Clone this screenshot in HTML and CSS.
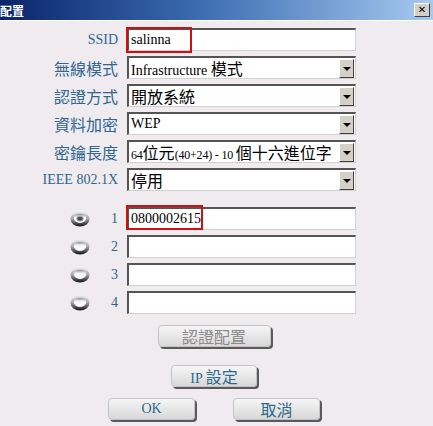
FILE: index.html
```html
<!DOCTYPE html>
<html lang="zh-Hant">
<head>
    <meta charset="UTF-8">
    <title>配置</title>
    <link rel="stylesheet" href="styles.css">
</head>
<body>
    <div class="titlebar">
        <span class="title">配置</span>
        <span class="close">✕</span>
    </div>

    <div class="form">
        <div class="row">
            <span class="label">SSID</span>
            <div class="field">
                <span class="value">salinna</span>
                <span class="mark mark-ssid"></span>
            </div>
        </div>
        <div class="row">
            <span class="label zh">無線模式</span>
            <div class="field select">
                <span class="value">Infrastructure <span class="zh">模式</span></span>
                <span class="arrow"></span>
            </div>
        </div>
        <div class="row">
            <span class="label zh">認證方式</span>
            <div class="field select">
                <span class="value zh">開放系統</span>
                <span class="arrow"></span>
            </div>
        </div>
        <div class="row">
            <span class="label zh">資料加密</span>
            <div class="field select">
                <span class="value">WEP</span>
                <span class="arrow"></span>
            </div>
        </div>
        <div class="row">
            <span class="label zh">密鑰長度</span>
            <div class="field select">
                <span class="value narrow">64<span class="zh">位元</span>(40+24) - 10 <span class="zh">個十六進位字</span></span>
                <span class="arrow"></span>
            </div>
        </div>
        <div class="row">
            <span class="label">IEEE 802.1X</span>
            <div class="field select">
                <span class="value zh">停用</span>
                <span class="arrow"></span>
            </div>
        </div>
    </div>

    <div class="form keys">
        <div class="row">
            <span class="label">
                <svg class="radio" width="20" height="16" viewBox="0 0 20 16">
                    <defs>
                        <linearGradient id="ring" x1="0" y1="0" x2="0" y2="1">
                            <stop offset="0" stop-color="#ececec"/>
                            <stop offset="0.5" stop-color="#a0a0a0"/>
                            <stop offset="1" stop-color="#101010"/>
                        </linearGradient>
                        <linearGradient id="hole" x1="0" y1="0" x2="0" y2="1">
                            <stop offset="0" stop-color="#8c8c8c"/>
                            <stop offset="0.4" stop-color="#f4f4f4"/>
                            <stop offset="1" stop-color="#ffffff"/>
                        </linearGradient>
                    </defs>
                    <ellipse cx="10" cy="8" rx="9.5" ry="7.5" fill="url(#ring)"/>
                    <ellipse cx="10" cy="7.3" rx="6.2" ry="4.6" fill="url(#hole)"/>
                    <ellipse cx="10" cy="7.7" rx="3.2" ry="2.4" fill="#4a4a4a" stroke="#a8a8a8" stroke-width="1"/>
                </svg>
                <span class="num">1</span>
            </span>
            <div class="field">
                <span class="value">0800002615<span class="caret"></span></span>
                <span class="mark mark-key"></span>
            </div>
        </div>
        <div class="row">
            <span class="label">
                <svg class="radio" width="20" height="16" viewBox="0 0 20 16">
                    <ellipse cx="10" cy="8" rx="9.5" ry="7.5" fill="url(#ring)"/>
                    <ellipse cx="10" cy="7.3" rx="6.2" ry="4.6" fill="url(#hole)"/>
                </svg>
                <span class="num">2</span>
            </span>
            <div class="field"></div>
        </div>
        <div class="row">
            <span class="label">
                <svg class="radio" width="20" height="16" viewBox="0 0 20 16">
                    <ellipse cx="10" cy="8" rx="9.5" ry="7.5" fill="url(#ring)"/>
                    <ellipse cx="10" cy="7.3" rx="6.2" ry="4.6" fill="url(#hole)"/>
                </svg>
                <span class="num">3</span>
            </span>
            <div class="field"></div>
        </div>
        <div class="row">
            <span class="label">
                <svg class="radio" width="20" height="16" viewBox="0 0 20 16">
                    <ellipse cx="10" cy="8" rx="9.5" ry="7.5" fill="url(#ring)"/>
                    <ellipse cx="10" cy="7.3" rx="6.2" ry="4.6" fill="url(#hole)"/>
                </svg>
                <span class="num">4</span>
            </span>
            <div class="field"></div>
        </div>
    </div>

    <div class="actions">
        <button class="btn btn-auth zh" disabled>認證配置</button>
        <button class="btn btn-ip">IP <span class="zh">設定</span></button>
        <div class="pair">
            <button class="btn btn-ok">OK</button>
            <button class="btn btn-cancel zh">取消</button>
        </div>
    </div>
</body>
</html>
```

FILE: styles.css
```css
body {
    margin: 0;
    width: 433px;
    height: 426px;
    overflow: hidden;
    background-color: #efebef;
    font-family: "Liberation Serif", "Noto Sans CJK TC", serif;
    font-size: 14px;
    color: #000;
}
.zh {
    font-family: "Noto Sans CJK TC", sans-serif;
    font-size: 16px;
}

/* title bar */
.titlebar {
    height: 20px;
    background: linear-gradient(to right, #0a246a, #3a6ab0 45%, #a6caf0);
    border-bottom: 1px solid #ffffff;
    display: flex;
    align-items: center;
    justify-content: space-between;
}
.title {
    color: #fff;
    font-family: "Noto Sans CJK TC", sans-serif;
    font-size: 12px;
    font-weight: bold;
}
.close {
    width: 14px;
    height: 12px;
    margin-right: 3px;
    background-color: #d4d0c8;
    border: 1px solid;
    border-color: #fff #404040 #404040 #fff;
    font-family: "DejaVu Sans", sans-serif;
    font-size: 10px;
    font-weight: bold;
    line-height: 12px;
    text-align: center;
}

/* form rows */
.form {
    display: flex;
    flex-direction: column;
    gap: 5px;
    padding-top: 7px;
}
.keys {
    padding-top: 16px;
}
.row {
    display: flex;
    align-items: center;
    height: 23px;
}
.label {
    width: 118px;
    margin-right: 9px;
    display: flex;
    justify-content: flex-end;
    align-items: center;
    color: #30668f;
    white-space: nowrap;
}
.radio {
    display: block;
    margin-right: 21px;
}
.num {
    color: #30668f;
    font-size: 14px;
}
.field {
    position: relative;
    width: 229px;
    height: 23px;
    box-sizing: border-box;
    background-color: #fff;
    border-style: solid;
    border-width: 2px 1px 1px 2px;
    border-color: #555 #d0d0d0 #d0d0d0 #555;
    display: flex;
    align-items: center;
    padding-left: 2px;
}
.value {
    white-space: nowrap;
}
.select .value {
    flex: 1;
    min-width: 0;
}
.narrow {
    font-size: 12px;
    letter-spacing: -0.2px;
}
.narrow .zh {
    letter-spacing: 0;
}
.arrow {
    flex: none;
    width: 13px;
    height: 17px;
    margin-right: 1px;
    background-color: #d4d0c8;
    border: 1px solid;
    border-color: #fff #404040 #404040 #fff;
    position: relative;
}
.arrow::after {
    content: "";
    position: absolute;
    left: 3px;
    top: 7px;
    border-left: 4px solid transparent;
    border-right: 4px solid transparent;
    border-top: 4px solid #000;
}
.caret {
    display: inline-block;
    width: 1px;
    height: 15px;
    vertical-align: -3px;
    background-color: #000;
}

/* red annotation boxes */
.mark {
    position: absolute;
    border: 2px solid #d01010;
    box-sizing: border-box;
}
.mark-ssid {
    left: -3px;
    top: -3px;
    width: 66px;
    height: 26px;
}
.mark-key {
    left: -3px;
    top: -4px;
    width: 77px;
    height: 25px;
}

/* buttons */
.actions {
    display: flex;
    flex-direction: column;
    align-items: center;
    padding-top: 11px;
    padding-right: 5px;
}
.btn {
    height: 22px;
    padding: 0;
    box-sizing: border-box;
    border: 1px solid #c4c4c4;
    border-radius: 4px;
    background: linear-gradient(#f6f6f6, #d8d8d8);
    box-shadow: 2px 2px 0 #5a5a5a;
    color: #2d6a8a;
    font-family: "Liberation Serif", "Noto Sans CJK TC", serif;
    font-size: 14px;
    line-height: 20px;
}
.btn.zh {
    font-family: "Noto Sans CJK TC", sans-serif;
    font-size: 16px;
}
.btn:disabled {
    color: #8a8a8a;
}
.btn-auth {
    width: 113px;
}
.btn-ip {
    width: 86px;
    margin-top: 18px;
}
.pair {
    display: flex;
    gap: 38px;
    margin-top: 11px;
}
.btn-ok,
.btn-cancel {
    width: 87px;
}
```
